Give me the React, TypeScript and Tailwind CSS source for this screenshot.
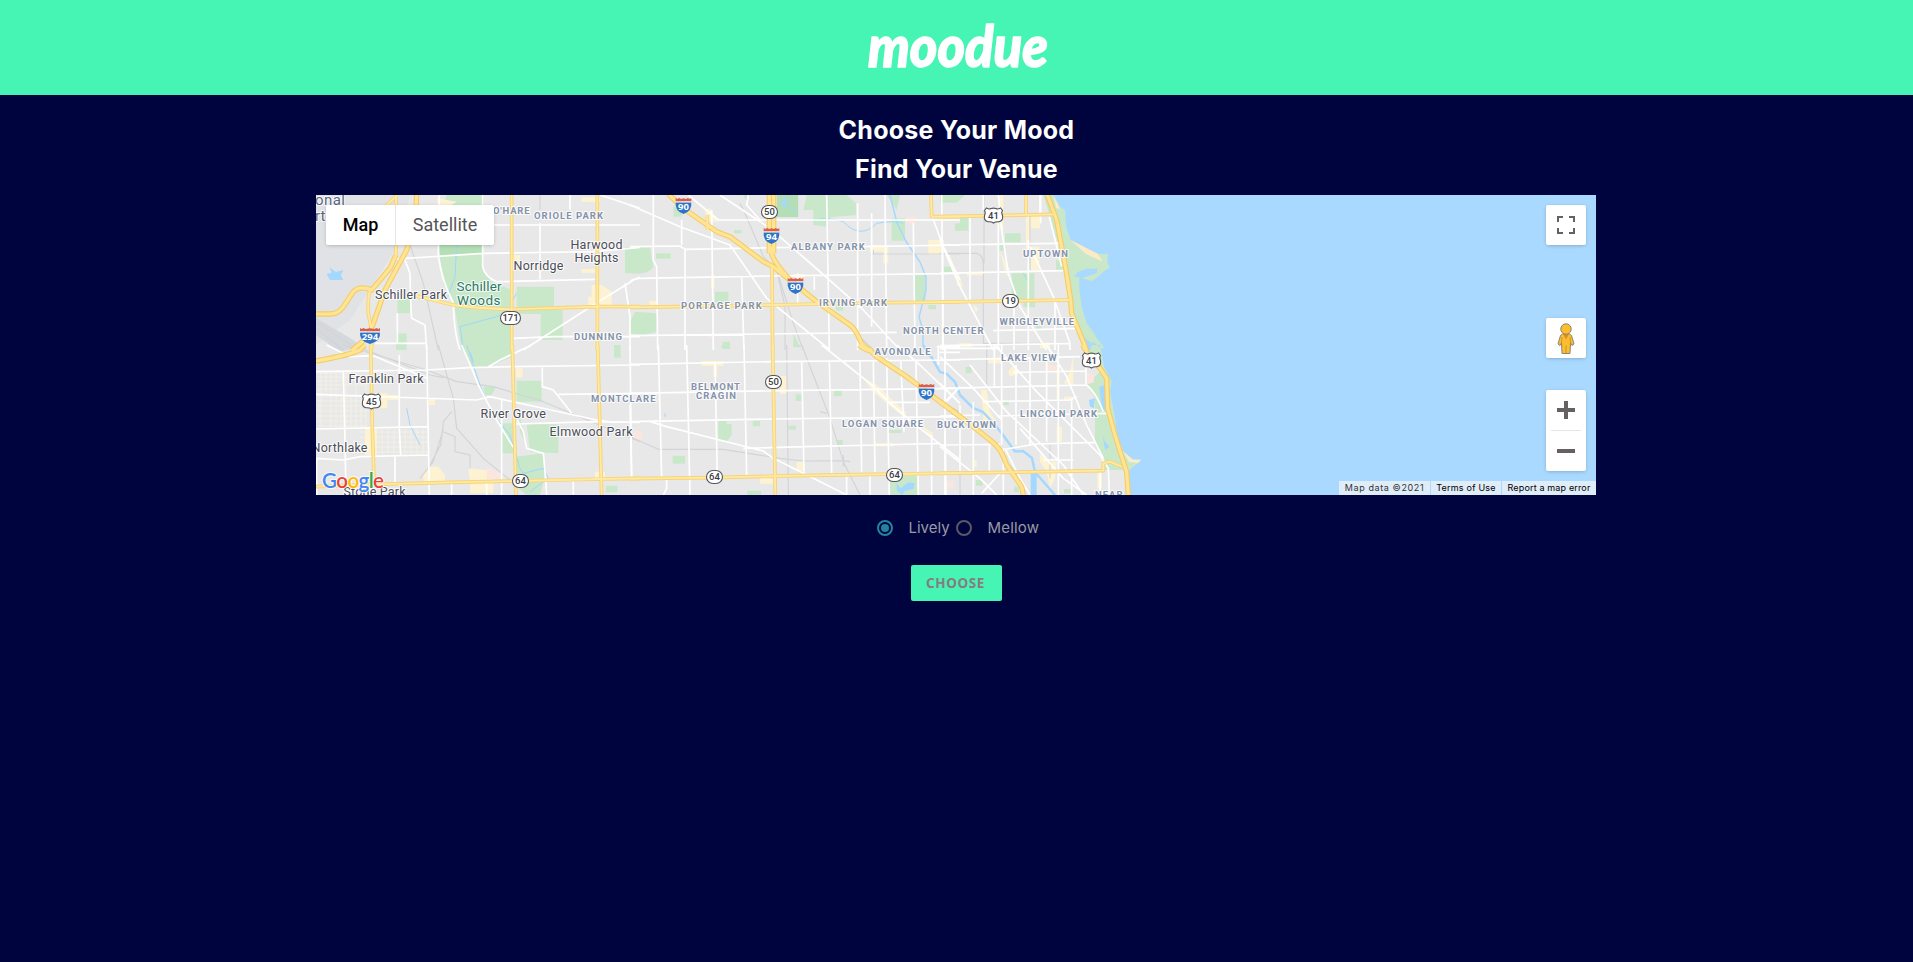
import React from "react";

type Tile = {
  x: number;
  y: number;
  parks: string;
  beige: string;
  pink?: string;
  rail: string;
  white: string;
  river: string;
  water?: string;
  road: string;
  highway: string;
};

const box = (x1: number, y1: number, x2: number, y2: number) => `M${x1} ${y1}H${x2}V${y2}H${x1}Z`;

const tiles: Tile[] = [
  {
    x: 310, y: 190,
    parks: "M410 15H522L518 240L545 275L605 300V480H455L430 330L400 280L385 165L385 100Z" + box(620, 290, 732, 372) + box(692, 360, 758, 450) + box(945, 170, 990, 250) + box(262, 320, 300, 370) + box(258, 430, 290, 480) + "M240 255L215 295L235 265Z",
    beige: "M845 285H875L905 305V345H835V320H845Z" + box(605, 195, 630, 212) + box(815, 237, 860, 248) + "M380 25L440 35L415 50H385Z" + box(815, 22, 870, 36),
    rail: "M300 165L340 280L385 480M18 395L130 470M18 415L100 480M690 15V60",
    white: "M260 207L520 190L850 185L990 172M520 105H990M518 15V230Q525 262 560 275L855 268M690 100V268M285 210L300 250Q302 360 305 385L345 405L350 480M195 460H350M388 15L385 200Q395 270 430 340Q432 430 450 480M640 480L850 345L975 268L990 262M610 445L730 440H990M945 280L960 380V480M780 15V60M870 15L990 55M262 370V460M385 200L400 270",
    river: "M440 165L435 260L410 330M450 410L560 380L600 365M450 410L460 480M620 310L600 345",
    water: "M58 232L78 246L100 240L92 256L100 270H60L50 252L65 248Z",
    road: "M605 15V480M862 15V480M320 318L430 345Q500 355 605 358L860 350L990 350M258 15L258 200M180 300Q173 320 175 370L185 420V480M262 15L215 60",
    highway: "M18 372H60Q85 372 100 350L130 305Q150 285 185 300L240 235L258 195M320 15L316 100L290 180L225 300L190 400L175 440L125 482",
  },
  {
    x: 310, y: 345,
    parks: "M455 0H605V35L530 68L485 65Z" + box(620, 107, 695, 170) + "M575 235H610V325H575Z" + "M650 238H745V325L660 320Z" + "M615 335L700 325L708 380L690 450H650L625 430Z" + box(888, 422, 922, 442) + box(912, 0, 932, 38) + "M520 125H558L545 150H525Z" + "M625 195L650 300L630 260Z",
    beige: box(200, 145, 232, 190) + box(232, 150, 265, 165) + box(165, 250, 200, 330) + "M360 365H385L405 390V412H340V385Z" + "M475 370L550 378V445H480V410Z" + box(618, 70, 638, 97) + box(357, 160, 375, 180) + box(855, 380, 885, 400),
    pink: "M530 365L575 385V402H530Z" + box(975, 257, 990, 283),
    rail: "M100 0L350 75L440 110L550 125L700 170L990 290M130 0L360 90L400 98M385 0L430 160L440 250L520 340L600 405M425 200L400 230L398 260L370 350L330 400M400 260L435 275V320L480 330V370M398 250L392 300L360 360",
    white: "M18 80L350 75L480 68L600 65L990 60M18 148L500 165L540 155L860 225L910 232M50 0L120 35L190 32L350 100M268 30V250L272 330M350 0L358 450M18 252L355 245M18 340L100 345L150 335L358 330M100 80L105 290L108 450M255 335V415M455 0L485 70L505 120L560 225L612 310M530 68L570 45L665 0M575 160V450M697 65V125L730 135L770 185L785 205M745 148L990 145M615 237L860 230L990 232M622 225L640 260L650 310L700 325L705 380L710 450M960 0L965 400M790 405V450M425 415V450M530 412V450M20 340V450",
    river: "M470 0L490 60L510 120L550 210L600 270L630 370L640 385L700 370L715 400L660 440M290 190L300 240L330 300M480 20L490 50",
    road: "M607 0L618 450M863 0L875 450M182 0L187 250L192 400M18 425L200 418L420 412L620 408L870 402L990 400",
    highway: "M18 48Q120 30 150 15L165 0",
  },
  {
    x: 630, y: 190,
    parks: "M0 172L60 172L70 230Q50 258 0 248Z" + box(78, 190, 122, 206) + box(312, 120, 335, 130) + box(440, 15, 505, 82) + "M530 15H650L678 40V75L600 82L590 110L550 105V60H520Z" + box(255, 305, 295, 337) + "M15 365L80 370V425L40 435L0 430V395Z" + "M770 15H810L800 60Z" + box(785, 85, 825, 152) + box(855, 255, 887, 342) + box(940, 230, 972, 248) + box(278, 455, 300, 477) + "M490 430L510 470H490Z" + box(618, 348, 640, 362) + box(895, 345, 918, 358) + "M340 15H360L350 35Z" + box(130, 50, 155, 80) + box(975, 105, 990, 122),
    beige: "M225 60L240 55L265 95H228Z" + "M720 165H775V220H760V185H720Z" + box(243, 255, 254, 292) + box(58, 332, 78, 350) + box(895, 150, 935, 195) + "M940 170L960 195L990 280L975 260Z" + box(490, 252, 525, 262),
    pink: box(830, 80, 858, 102) + box(235, 432, 252, 444),
    rail: "M345 70L400 200L440 240L465 350V480M730 180V195M730 192H990M345 70L330 40M440 240L490 400L520 480M690 440L730 480",
    white: "M0 45L150 110L300 165L410 325L600 480M175 15L265 90H990M0 170L150 168L165 178L480 172M700 170L990 165M0 275Q10 265 30 265L410 258L990 250M0 437L400 432L800 427M70 15V210L80 230L83 480M155 90V165M165 178V480M245 60L250 480M335 260L342 480M590 15L598 480M503 250V340M553 260V300M683 40V480M725 70V410M765 15L770 480M850 100L855 480M935 15L940 480M270 15L420 115L530 210L700 360L810 480M903 70L940 170L990 270M355 15L350 45L390 90M920 470H990",
    river: "M545 90Q600 80 640 95Q690 150 740 100Q800 90 820 100M455 30L465 50L500 60M470 20L480 45",
    water: "M455 30L468 25V48L458 50Z",
    road: "M426 230L428 480M0 352L430 345L560 342L770 338L990 336M903 15L905 80H990M232 75V120",
    highway: "M115 12L160 55L260 125L300 140L400 215L430 230L560 335L660 405Q675 415 690 450Q700 475 725 480M418 15V190M431 15V190M425 170V190Q430 215 480 270",
  },
  {
    x: 630, y: 345,
    parks: "M265 228H290V237H305V270L290 290L265 285Z" + box(128, 332, 165, 356) + box(368, 228, 390, 244) + box(475, 242, 498, 254) + box(497, 148, 515, 168) + box(612, 135, 635, 154) + box(275, 0, 300, 10) + box(352, 437, 393, 450) + box(775, 255, 815, 264) + box(780, 393, 862, 450) + box(622, 285, 638, 300) + box(490, 0, 512, 7),
    beige: box(450, 93, 470, 147) + box(390, 398, 430, 416) + box(500, 350, 520, 378) + "M215 48H280V62H262V95H250V62H215Z" + box(735, 295, 792, 304) + "M700 100L740 120L830 205L820 215L730 140Z" + "M870 240L910 265L900 275Z",
    pink: box(8, 258, 37, 286) + box(952, 410, 972, 430),
    rail: "M470 0L475 450M515 0L600 220L640 350L690 450M0 275L85 313L280 313L450 340L520 348L640 347L660 350M570 200L590 205M640 330V365",
    white: "M0 58L420 50L990 45M0 145L450 137L990 130M0 230L430 222L990 215M60 230L110 245L400 318L430 340L520 385L650 450M340 310L520 305L750 300L930 295M775 172L900 172M85 0L95 400M170 0L180 450M255 50L262 400M342 0L350 390M515 50L522 385M598 50L605 385M690 50L695 380M770 40L778 450M812 45L822 260M730 50L735 380M858 50L865 450M905 270V450M945 220L948 450M575 0L720 115L780 175L870 250L990 345M110 400V430L100 450M650 385V450M720 385V450M925 5V60M945 0V60M925 5H990M925 22H990M870 60L990 175M950 165L990 125M800 0L870 60M0 180L5 400",
    river: "M105 205V215",
    water: "M800 415L812 430L835 412L855 415L850 432L825 438L815 450L800 435Z",
    road: "M428 0L432 230L436 450M0 401L250 398L500 392L990 384",
    highway: "M687 0Q700 12 722 18L740 35L830 95L990 215",
  },
  {
    x: 940, y: 190,
    parks: "M310 15H520V480H440L395 370L380 240L345 130Z" + box(195, 130, 242, 157) + "M60 82H85V122H45V100H60Z" + box(215, 250, 283, 330) + box(250, 330, 285, 352) + "M0 15H75L50 38H0Z" + box(10, 230, 42, 248) + box(178, 165, 192, 182) + box(348, 210, 380, 242) + box(288, 408, 304, 416),
    beige: "M258 75H300V115H272V180H258Z" + box(178, 15, 190, 120) + "M180 185L210 240L200 260Z" + "M55 250L70 290L50 285Z" + box(80, 246, 130, 256) + box(272, 170, 298, 240) + box(300, 455, 330, 475) + box(55, 460, 95, 472) + "M98 345L115 355L108 368Z",
    rail: "M0 190H110Q128 195 130 220V460H390M132 15V220M270 75V240",
    white: "M0 165L360 160M0 250L370 242M160 422L420 415M0 467L390 460M8 150V480M90 80V330M130 15V60M175 100V480M222 330V480M302 15V100M265 150V480M345 330V480M0 150L60 290L160 480M175 15L185 120L205 250L240 350L320 480M270 170L340 320L390 460V480M328 80L365 230M300 15V70",
    river: "M250 250L260 268",
    road: "M0 80L160 77L340 73M258 15V75M0 336L390 330",
    highway: "M322 15L350 90L365 170L378 240L392 330L395 370L440 480",
  },
  {
    x: 940, y: 345,
    parks: "M425 0H520L640 350L560 375H490V335L465 290V160L440 120L490 70Z" + box(77, 65, 95, 85) + box(190, 170, 206, 181) + box(108, 405, 128, 422) + box(372, 432, 392, 445) + box(222, 425, 236, 442),
    beige: "M122 135H140L150 200L170 230H130V195Z" + "M300 325L325 350H350L345 400L330 430L320 380L300 350Z" + box(145, 40, 185, 55) + "M205 80L220 60L240 85L210 95Z" + box(350, 60, 358, 165) + "M372 115L390 80L400 30V120Z" + box(472, 385, 486, 430) + box(350, 245, 366, 290) + box(98, 345, 110, 365) + box(372, 155, 400, 164),
    pink: "M445 85L462 90V112L442 118Z" + box(318, 60, 348, 78) + box(22, 408, 42, 428),
    rail: "M140 0V130M0 170L60 200M60 345V450M150 285L240 400M330 300V400",
    white: "M15 0V450M60 180V380M100 170V450M163 0V130M185 0V300M190 310V450M228 60V300M270 40V300M320 50V290M355 0V450M395 160V450M438 0V120M148 300V385M0 45L420 35M220 82L440 78M0 130L440 120M130 170L390 165L410 155M0 213L120 210M170 213L500 205M0 300L180 298M200 312L290 297L465 292M310 345H400M0 35L100 130L185 225M20 170L55 130M0 115L50 165M165 0L290 140L480 330L505 370L508 450M90 60L200 200L370 360L430 450M240 250L370 400L440 450M0 305L120 400L170 450M320 0L380 95L440 240L490 340M440 120Q470 145 490 200M195 310L240 400L270 450M480 380V450M125 445L180 385M0 10H180",
    river: "",
    water: "M478 125L495 120V195H485ZM447 165L465 160L462 190L450 185ZM488 270L495 290L508 305L495 315ZM272 385H290V450H272Z",
    road: "M0 385L490 377V355L510 350L545 365",
    highway: "M0 170L100 245L150 285Q185 310 200 360L245 425L250 450M428 0L445 30L480 70L500 100L503 190L525 270L550 350L560 380L565 450",
  },
];

const lake =
  "M340 15L360 50L375 60L378 110L392 150L430 172L475 192L503 192L503 222L510 232L490 245L472 262L455 273L425 265L470 250L472 236L440 236L415 245L402 260L418 262L418 300L425 350L440 400L462 430L470 445L492 472L485 476L460 455L455 460L430 440L415 410L402 385L440 480L452 480L455 465L480 465L492 530L515 575L510 605L522 665L530 725L545 775L560 800L578 812L603 812L570 838L562 850L572 915H1970V15Z";

const areas: [string, number, number, number][] = [
  ["O'HARE", 493, 529.5, 214], ["ORIOLE PARK", 534, 603, 219], ["DUNNING", 574, 622, 340],
  ["ALBANY PARK", 791, 864.7, 250], ["PORTAGE PARK", 681, 761.7, 309], ["IRVING PARK", 819, 887, 306],
  ["NORTH CENTER", 903, 983.5, 334], ["AVONDALE", 874.5, 930.5, 355], ["UPTOWN", 1023, 1068, 257],
  ["WRIGLEYVILLE", 999.5, 1074, 325], ["LAKE VIEW", 1001, 1056.5, 361], ["LINCOLN PARK", 1020, 1097, 417],
  ["BUCKTOWN", 937, 996, 428], ["LOGAN SQUARE", 842, 923, 427], ["BELMONT", 691, 740, 390],
  ["CRAGIN", 696, 736, 399], ["MONTCLARE", 591, 655.5, 402], ["NEAR", 1095, 1122.5, 497.5],
];

const towns: [string, number, number, number][] = [
  ["Schiller Park", 375, 447, 299], ["Norridge", 513.5, 563.5, 270], ["Harwood", 570.5, 622.5, 248.5],
  ["Heights", 574.5, 618.5, 261.5], ["Franklin Park", 348.5, 423.5, 382.5], ["River Grove", 480.5, 546, 417.5],
  ["Elmwood Park", 549.5, 632.5, 435.5], ["Northlake", 311.5, 367.5, 451.5], ["Stone Park", 343.5, 405.5, 496],
];

const interstates: [string, number, number][] = [
  ["294", 370, 336], ["90", 683.5, 206], ["94", 771.5, 236], ["90", 795.5, 286], ["90", 926.5, 392],
];

const stateRoutes: [string, number, number][] = [
  ["171", 510.5, 318], ["50", 769.5, 212], ["50", 773.5, 382], ["64", 520.5, 481], ["64", 714.5, 477],
  ["64", 894.5, 475], ["19", 1010.5, 301],
];

const usRoutes: [string, number, number][] = [["45", 371.5, 401.5], ["41", 993.5, 215.5], ["41", 1091.5, 360.5]];

function Layer({ pick, ...rest }: { pick: (t: Tile) => string | undefined } & React.SVGProps<SVGPathElement>) {
  return (
    <>
      {tiles.map((t) => (
        <path key={`${t.x}-${t.y}`} d={pick(t)} transform={`translate(${t.x} ${t.y}) scale(.33333)`} {...rest} />
      ))}
    </>
  );
}

function MapCanvas() {
  const line = { fill: "none", strokeLinejoin: "round" as const };
  return (
    <svg viewBox="316 195 1280 300" className="block h-[300px] w-[1280px] font-[Roboto,sans-serif]">
      <rect x="316" y="195" width="1280" height="300" fill="#e8e8e8" />
      <path d="M316 195H410L395 250L350 320L316 345Z" fill="#e0e2e6" />
      <path d="M316 318L350 338L362 346L340 352L316 335Z" fill="#d5d8dc" />
      <g stroke="#f3f0e6" strokeWidth="1" fill="none">
        <path d="M318 373H350M318 377H367M318 381H340M318 385H366M318 389H340M318 396H360M318 401H367M318 406H360M318 411H367M318 416H366M318 421H362M318 426H366M321 373V427M326 373V392M331 373V427M336 373V427M341 397V427M346 373V427M351 395V427M356 373V427M361 395V427M366 375V427" />
        <path d="M360 432H428M360 437H428M365 442H428M365 447H420M365 452H428M370 429V454M376 429V454M382 429V454M388 429V454M394 429V454M405 429V454M411 429V454M417 429V454M423 429V454" />
      </g>
      <Layer pick={(t) => t.parks} fill="#c9e8ca" />
      <path d="M439 245H482V254L440 255ZM777 195H798V217H777Z" fill="#b4dfb6" />
      <Layer pick={(t) => t.beige} fill="#fdf3d3" />
      <Layer pick={(t) => t.pink} fill="#fbe6df" />
      <path d={lake} transform="translate(940 190) scale(.33333)" fill="#a9d9ff" />
      <path d="M1070.7 240L1098 254L1102.500 261.500L1086 254ZM1053.500 195L1060 209L1056 208ZM1122.700 451L1133 459.500L1141 459.500L1138 463L1129 462Z" fill="#fcebc6" />
      <Layer pick={(t) => t.rail} {...line} stroke="#d2d4d8" strokeWidth="3.500" />
      <Layer pick={(t) => t.river} {...line} stroke="#9fd7fb" strokeWidth="3" />
      <Layer pick={(t) => t.water} fill="#a5d8ff" />
      <path d="M890 195L897 223L907 243L920 262L926 277V290L919 317L923 330V345" fill="none" stroke="#a5d8ff" strokeWidth="1.500" />
      <path d="M923 345L932 358L940 372L947 374L955 382L960 395L973 408L983 412L995 425L1003 435L1015 451.500L1023 451L1032 458L1035 472L1055 495" fill="none" stroke="#a5d8ff" strokeWidth="2.500" />
      <Layer pick={(t) => t.white} {...line} stroke="#ffffff" strokeWidth="5" />
      <Layer pick={(t) => t.road} {...line} stroke="#f6d377" strokeWidth="11" />
      <Layer pick={(t) => t.highway} {...line} stroke="#f3cc66" strokeWidth="16" />
      <Layer pick={(t) => t.road} {...line} stroke="#ffe9a3" strokeWidth="5.500" />
      <Layer pick={(t) => t.highway} {...line} stroke="#ffe494" strokeWidth="9.500" />

      <g fontSize="9.500" fontWeight="700" fill="#8492aa" stroke="#ffffff" strokeWidth="2.200" strokeOpacity=".8" paintOrder="stroke" strokeLinejoin="round">
        {areas.map(([t, a, b, y]) => (
          <text key={t} x={a} y={y} textLength={b - a}>{t}</text>
        ))}
      </g>
      <g fontSize="12.500" fill="#4b4d58" stroke="#ffffff" strokeWidth="2.200" strokeOpacity=".8" paintOrder="stroke" strokeLinejoin="round">
        {towns.map(([t, a, b, y]) => (
          <text key={t} x={a} y={y} textLength={b - a}>{t}</text>
        ))}
        <text x="456.500" y="290.500" textLength="45" fontSize="13.500" fill="#2b7a66">Schiller</text>
        <text x="457" y="304.500" textLength="43.500" fontSize="13.500" fill="#2b7a66">Woods</text>
        <text x="315" y="205" textLength="30" fontSize="15" fill="#5c6881">onal</text>
        <text x="315" y="221" fontSize="15" fill="#5c6881">rt</text>
      </g>

      {interstates.map(([t, x, y]) => {
        const w = t.length > 2 ? 10 : 7.8;
        return (
          <g key={`${t}-${x}`}>
            <path d={`M${x - w} ${y - 3.5}H${x + w}Q${x + w + 1} ${y + 5} ${x} ${y + 8}Q${x - w - 1} ${y + 5} ${x - w} ${y - 3.5}Z`} fill="#2d74c9" />
            <path d={`M${x - w} ${y - 8}l1.500 1 2-1 2 1 ${w - 5.5} -.8 ${w - 5.5} .8 2-1 2 1 1.500-1v3.500H${x - w}Z`} fill="#d6604d" />
            <path d={`M${x - w} ${y - 4.2}H${x + w}`} stroke="#ffffff" strokeWidth=".7" />
            <text x={x} y={y + 4.4} textAnchor="middle" fontSize="9.500" fontWeight="700" fill="#ffffff" className="font-['Noto_Sans',sans-serif]">{t}</text>
          </g>
        );
      })}
      {stateRoutes.map(([t, x, y]) => {
        const w = t.length > 2 ? 10 : 8;
        return (
          <g key={`${t}-${x}`}>
            <rect x={x - w} y={y - 6.5} width={w * 2} height="13" rx="6.500" fill="#ffffff" stroke="#55565b" strokeWidth="1.100" />
            <text x={x} y={y + 3.4} textAnchor="middle" fontSize="9.500" fontWeight="500" fill="#3c3d42">{t}</text>
          </g>
        );
      })}
      {usRoutes.map(([t, x, y]) => (
        <g key={`${t}-${x}`}>
          <path
            transform={`translate(${x} ${y})`}
            d="M-7 -7.500Q-4 -5.800 -2.500 -7Q0 -7.800 2.500 -7Q4 -5.800 7 -7.500L9 -5Q7.500 -3 9 0Q10 5 5.500 6.300Q2 6 0 7.500Q-2 6 -5.500 6.300Q-10 5 -9 0Q-7.500 -3 -9 -5Z"
            fill="#ffffff" stroke="#55565b" strokeWidth="1.100"
          />
          <text x={x} y={y + 3.6} textAnchor="middle" fontSize="9.500" fontWeight="500" fill="#3c3d42">{t}</text>
        </g>
      ))}

      <text x="322" y="487.500" textLength="62" fontSize="20.500" className="font-[Lato,sans-serif] font-semibold" stroke="#ffffff" strokeWidth="2" strokeOpacity=".75" paintOrder="stroke">
        <tspan fill="#4285f4">G</tspan><tspan fill="#ea4335">o</tspan><tspan fill="#fbbc05">o</tspan><tspan fill="#4285f4">g</tspan><tspan fill="#34a853">l</tspan><tspan fill="#ea4335">e</tspan>
      </text>
    </svg>
  );
}

function Pegman() {
  return (
    <svg viewBox="0 0 18 31" className="h-[31px] w-[18px]">
      <path d="M5.500 11H12.500L14.500 12.500L17 21L15 22.500L13.500 20L13 30.500H5L4.500 20L3 22.500L1 21L3.500 12.500Z" fill="#fbbf2d" stroke="#8d8470" strokeWidth="1" />
      <path d="M9 22.500V30.500M5 14L4.500 20M13 14L13.500 20" stroke="#b98a3c" strokeWidth=".8" />
      <path d="M6 11H12L9 16.500Z" fill="#e08a2c" />
      <circle cx="9" cy="6" r="5.200" fill="#fbbf2d" stroke="#8d8470" strokeWidth="1" />
    </svg>
  );
}

const control = "flex w-10 items-center justify-center rounded-[2px] bg-white shadow-[0_1px_4px_-1px_rgba(0,0,0,0.3)]";

function VenueMap() {
  return (
    <section className="relative h-[300px] w-[1280px] overflow-hidden">
      <MapCanvas />
      <div className="absolute left-[10px] top-[10px] flex h-10 rounded-[2px] bg-white font-[Roboto,sans-serif] text-[18px] shadow-[0_1px_4px_-1px_rgba(0,0,0,0.3)]">
        <button className="w-[70px] border-r border-[#e6e6e6] pb-px font-medium text-black">Map</button>
        <button className="w-[98px] pb-px text-[#565656]">Satellite</button>
      </div>
      <div className="absolute right-[10px] top-[10px]">
        <button className={`${control} h-10`}>
          <svg viewBox="0 0 18 18" className="size-[18px]" fill="none" stroke="#666064" strokeWidth="2">
            <path d="M1 6V1H6M12 1H17V6M17 12V17H12M6 17H1V12" />
          </svg>
        </button>
      </div>
      <div className="absolute bottom-6 right-[10px] flex flex-col gap-8">
        <button className={`${control} h-10`}>
          <Pegman />
        </button>
        <div className={`${control} h-[81px] flex-col`}>
          <svg viewBox="0 0 18 18" className="my-[11px] size-[18px]" stroke="#666064" strokeWidth="4">
            <path d="M0 9H18M9 0V18" />
          </svg>
          <div className="h-px w-[30px] bg-[#e6e6e6]" />
          <svg viewBox="0 0 18 18" className="my-[11px] size-[18px]" stroke="#666064" strokeWidth="4">
            <path d="M0 9H18" />
          </svg>
        </div>
      </div>
      <div className="absolute bottom-0 right-0 flex h-[14px] gap-px font-[Inter,sans-serif] text-[9px] leading-[14px] text-black">
        <span className="w-[91px] whitespace-nowrap bg-[#dfedf9] text-center tracking-[0.6px] text-[#333]">Map data ©2021</span>
        <span className="w-[70px] whitespace-nowrap bg-[#dfedf9] text-center tracking-[0.2px]">Terms of Use</span>
        <span className="w-[94px] whitespace-nowrap bg-[#dfedf9] text-center tracking-[0.15px]">Report a map error</span>
      </div>
    </section>
  );
}

function Radio({ on }: { on?: boolean }) {
  return (
    <span className={`flex size-4 items-center justify-center rounded-full border-2 ${on ? "border-[#2483a0]" : "border-[#5c5766]"}`}>
      {on && <span className="size-2 rounded-full bg-[#2483a0]" />}
    </span>
  );
}

export default function App() {
  return (
    <div className="flex min-h-[962px] flex-col items-center bg-[#00043e]">
      <header className="flex h-[95px] w-full justify-center bg-[#46f4b4]">
        <svg viewBox="0 0 190 80" className="ml-[3px] h-[80px] w-[190px]">
          <text x="5" y="67" textLength="180" lengthAdjust="spacingAndGlyphs" fontSize="58" stroke="#ffffff" strokeWidth="1.500" strokeLinejoin="round" className="fill-white font-[Lato,sans-serif] font-black italic">moodue</text>
        </svg>
      </header>
      <h1 className="mt-4 text-center font-[Inter,sans-serif] text-[25px] font-bold leading-[39px] text-white">
        <span className="block tracking-[0.25px]">Choose Your Mood</span>
        <span className="block tracking-[0.25px]">Find Your Venue</span>
      </h1>
      <div className="mt-[6px] flex w-full pl-[316px]">
        <VenueMap />
      </div>
      <form className="flex flex-col items-center">
        <div className="ml-[3px] mt-[19px] flex h-[26px] items-center font-[Inter,sans-serif] text-[15px] text-[#9a9aa4]">
          <span className="mt-0.5"><Radio on /></span>
          <label className="ml-4 mt-0.5 w-[39px]">Lively</label>
          <span className="ml-2 mt-0.5"><Radio /></span>
          <label className="ml-4 mt-0.5 w-[52px] tracking-[0.2px]">Mellow</label>
        </div>
        <button type="button" className="mt-[25px] h-9 w-[91px] rounded-[2px] bg-[#46f4b4] pr-0.5 font-['Noto_Sans',sans-serif] text-[13.500px] font-bold tracking-[0.6px] text-[#857c82]">
          CHOOSE
        </button>
      </form>
    </div>
  );
}
